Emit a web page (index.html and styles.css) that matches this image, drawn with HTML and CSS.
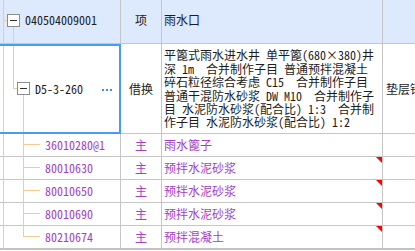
FILE: index.html
```html
<!DOCTYPE html>
<html lang="zh-CN">
<head>
<meta charset="utf-8">
<title>清单</title>
<link rel="stylesheet" href="styles.css">
</head>
<body>
<div class="grid">
  <!-- header row -->
  <div class="cell c1 hdr">
    <span class="ln trunk"></span>
    <span class="ln hdr-stub"></span>
    <span class="ln hdr-down"></span>
    <span class="toggle"></span>
    <span class="code">040504009001</span>
  </div>
  <div class="cell c2 hdr">项</div>
  <div class="cell c3 hdr">雨水口</div>
  <div class="cell c4 hdr"></div>

  <!-- selected quota row -->
  <div class="cell c1 quota sel">
    <span class="ln trunk"></span>
    <span class="ln q-up"></span>
    <span class="ln q-stub"></span>
    <span class="ln q-down"></span>
    <span class="toggle"></span>
    <span class="code">D5-3-260</span>
    <span class="dots"><i></i><i></i><i></i></span>
  </div>
  <div class="cell c2">借换</div>
  <div class="cell c3 desc">
    <div>平篦式雨水进水井 单平篦(680×380)井</div>
    <div>深 1m  合并制作子目 普通预拌混凝土</div>
    <div>碎石粒径综合考虑 C15  合并制作子目</div>
    <div>普通干混防水砂浆 DW M10  合并制作子</div>
    <div>目 水泥防水砂浆(配合比) 1:3  合并制</div>
    <div>作子目 水泥防水砂浆(配合比) 1:2</div>
  </div>
  <div class="cell c4">垫层铺</div>

  <!-- child rows -->
  <div class="cell c1 kid"><span class="ln trunk"></span><span class="ln kid-v"></span><span class="ln kid-h"></span><span class="code">36010280@1</span></div>
  <div class="cell c2 kid">主</div>
  <div class="cell c3 kid">雨水篦子</div>
  <div class="cell c4"></div>

  <div class="cell c1 kid"><span class="ln trunk"></span><span class="ln kid-v"></span><span class="ln kid-h"></span><span class="code">80010630</span></div>
  <div class="cell c2 kid">主</div>
  <div class="cell c3 kid flag">预拌水泥砂浆</div>
  <div class="cell c4"></div>

  <div class="cell c1 kid"><span class="ln trunk"></span><span class="ln kid-v"></span><span class="ln kid-h"></span><span class="code">80010650</span></div>
  <div class="cell c2 kid">主</div>
  <div class="cell c3 kid flag">预拌水泥砂浆</div>
  <div class="cell c4"></div>

  <div class="cell c1 kid"><span class="ln trunk"></span><span class="ln kid-v"></span><span class="ln kid-h"></span><span class="code">80010690</span></div>
  <div class="cell c2 kid">主</div>
  <div class="cell c3 kid flag">预拌水泥砂浆</div>
  <div class="cell c4"></div>

  <div class="cell c1 kid last"><span class="ln trunk"></span><span class="ln kid-v-end"></span><span class="ln kid-h"></span><span class="code">80210674</span></div>
  <div class="cell c2 kid last">主</div>
  <div class="cell c3 kid flag last">预拌混凝土</div>
  <div class="cell c4 last"></div>
</div>
</body>
</html>
```

FILE: styles.css
```css
html, body {
  margin: 0;
  padding: 0;
  background: #ffffff;
}

body {
  font-family: "Noto Sans Mono CJK SC", "Noto Sans CJK SC", monospace;
  font-size: 12px;
  color: #1c1c1c;
  overflow: hidden;
}

.grid {
  display: grid;
  grid-template-columns: 121px 41px 221px 40px;
  grid-template-rows: 44px 90px 23px 23px 23px 23px 24px;
  width: 423px;
}

.cell {
  position: relative;
  box-sizing: border-box;
  border-right: 1px solid #c6c6c6;
  border-bottom: 1px solid #c6c6c6;
  white-space: nowrap;
  display: flex;
  align-items: center;
  line-height: 14px;
}

.cell.last {
  border-bottom: 2px solid #c2c2c2;
}

.hdr {
  background: #dde9fc;
  padding-bottom: 3px;
}

.c2 {
  justify-content: center;
}

.c3 {
  padding-left: 2px;
  overflow: hidden;
}

.c4 {
  padding-left: 3px;
  border-right: none;
  overflow: hidden;
}

.kid {
  color: #a43fc6;
}

/* tree connector lines */
.ln {
  position: absolute;
  background: #f9ca8e;
}

.trunk {
  left: 3px;
  top: 0;
  bottom: -1px;
  width: 1px;
}

.hdr-stub {
  left: 3px;
  top: 20px;
  width: 4px;
  height: 1px;
}

.hdr-down {
  left: 13px;
  top: 26px;
  bottom: -1px;
  width: 1px;
}

.q-up {
  left: 13px;
  top: 0;
  height: 44px;
  width: 1px;
}

.q-stub {
  left: 13px;
  top: 44px;
  width: 4px;
  height: 1px;
}

.q-down {
  left: 23px;
  top: 50px;
  bottom: -1px;
  width: 1px;
}

.kid-v {
  left: 23px;
  top: 0;
  bottom: -1px;
  width: 1px;
}

.kid-v-end {
  left: 23px;
  top: 0;
  height: 10px;
  width: 1px;
}

.kid-h {
  left: 23px;
  top: 10px;
  width: 17px;
  height: 1px;
}

/* expand/collapse toggle */
.toggle {
  position: relative;
  box-sizing: border-box;
  width: 13px;
  height: 13px;
  border: 1px solid #8c8c8c;
  background: #ffffff;
  flex: none;
}

.toggle::before {
  content: "";
  position: absolute;
  left: 2px;
  right: 2px;
  top: 5px;
  height: 1px;
  background: #303030;
}

.hdr.c1 {
  padding-left: 7px;
}

.hdr.c1 .code {
  margin-left: 5px;
}

.quota {
  padding-left: 17px;
}

.quota .code {
  margin-left: 5px;
}

.kid.c1 {
  padding-left: 45px;
}

.dots {
  display: flex;
  gap: 2px;
  margin-left: auto;
  margin-right: 8px;
  margin-top: 2px;
}

.dots i {
  display: block;
  width: 2px;
  height: 2px;
  background: #3a8fe6;
}

/* selection frame */
.sel::after {
  content: "";
  position: absolute;
  top: 0;
  left: -2px;
  right: -1px;
  bottom: -1px;
  border: 2px solid #4a9cf1;
  pointer-events: none;
}

/* multi-line description */
.desc {
  flex-direction: column;
  align-items: flex-start;
  justify-content: center;
  line-height: 13.34px;
}

.desc div {
  white-space: pre;
}

/* red change marker */
.flag::after {
  content: "";
  position: absolute;
  top: 0;
  right: 0;
  width: 0;
  height: 0;
  border-top: 6px solid #ff0000;
  border-left: 6px solid transparent;
}
```
